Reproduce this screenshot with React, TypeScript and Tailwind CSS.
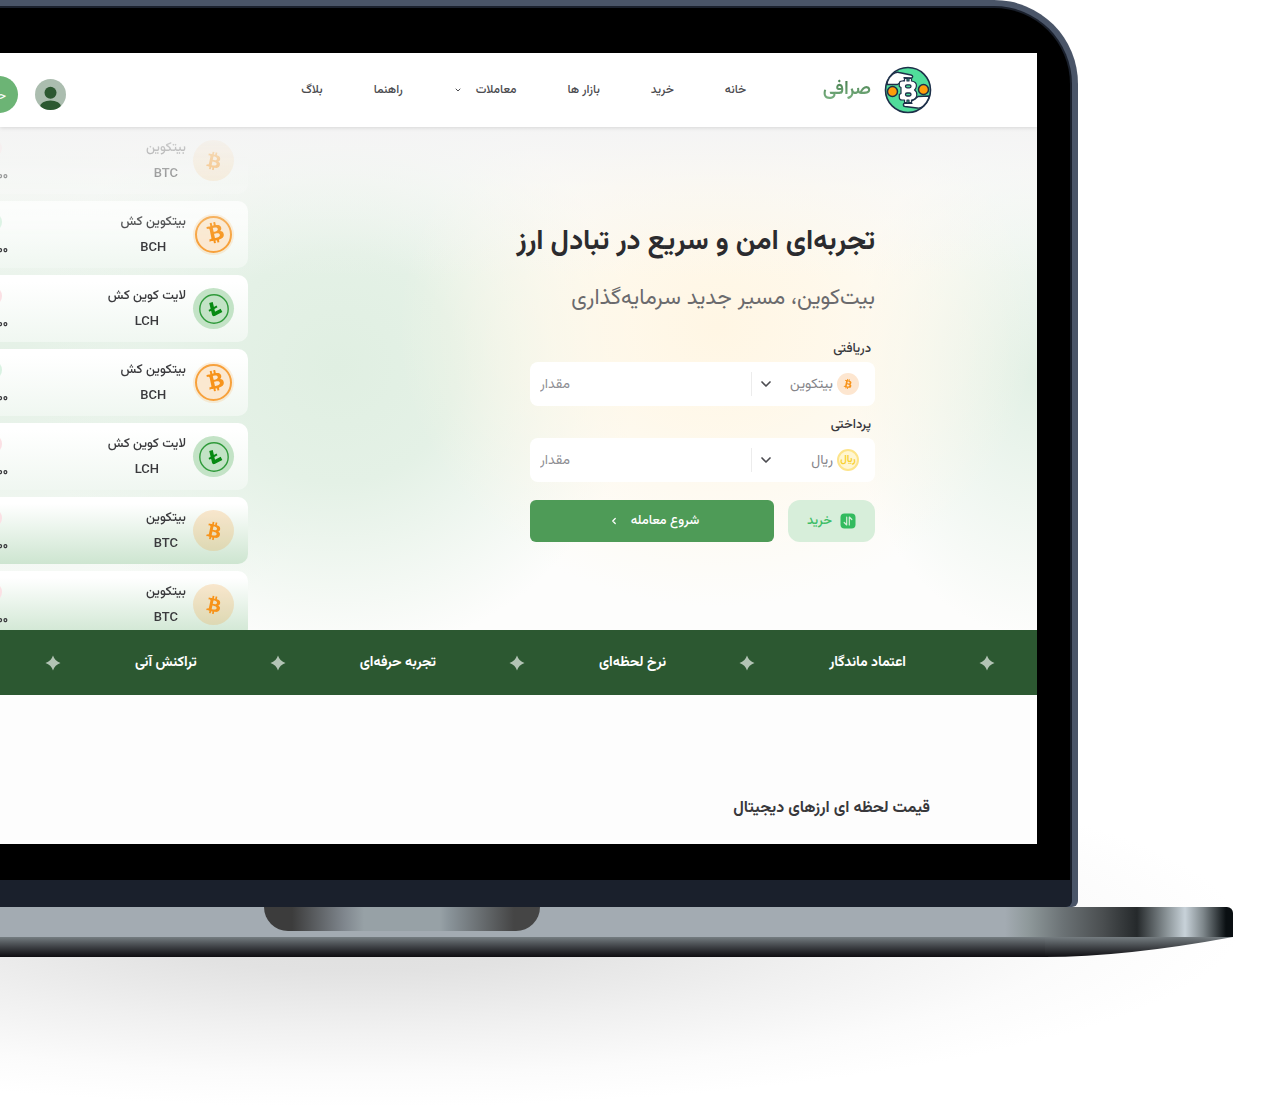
import { useState } from "react";
import { FaBtc } from "react-icons/fa";
import { ChevronDown, ChevronLeft } from "lucide-react";

type Coin = "btc" | "bch" | "lch";

const navItems = ["خانه", "خرید", "بازار ها", "معاملات", "راهنما", "بلاگ"];

const assets: { name: string; symbol: string; coin: Coin; up: boolean }[] = [
  { name: "بیتکوین", symbol: "BTC", coin: "btc", up: false },
  { name: "بیتکوین کش", symbol: "BCH", coin: "bch", up: true },
  { name: "لایت کوین کش", symbol: "LCH", coin: "lch", up: false },
  { name: "بیتکوین کش", symbol: "BCH", coin: "bch", up: true },
  { name: "لایت کوین کش", symbol: "LCH", coin: "lch", up: false },
  { name: "بیتکوین", symbol: "BTC", coin: "btc", up: false },
  { name: "بیتکوین", symbol: "BTC", coin: "btc", up: false },
];

const features = ["اعتماد ماندگار", "نرخ لحظه‌ای", "تجربه حرفه‌ای", "تراکنش آنی"];

function Logo() {
  return (
    <svg viewBox="0 0 48 48" className="size-12 shrink-0" aria-hidden="true">
      <circle cx="24" cy="24" r="22.5" fill="#50dd9b" stroke="#1d2f49" strokeWidth="1.6" />
      <path
        d="M3.500 15.500C6 9 11 5.500 15 6.500L27 9C29.500 9.600 29 12 27 12L20 11.800L23 13L17.500 16L13.500 18.500L3 18.500Z"
        fill="#fff" stroke="#1d2f49" strokeWidth="1.400" strokeLinejoin="round"
      />
      <path
        d="M44.500 32.500C42 39 37 43 33 42L21 40.500C18.500 40 19 37.300 21 37.300L28 37.300L25 36.300L30.500 33.500L34 30.500L45.200 30Z"
        fill="#fff" stroke="#1d2f49" strokeWidth="1.400" strokeLinejoin="round"
      />
      <circle cx="8.500" cy="25.500" r="5" fill="#ff9d0a" stroke="#1d2f49" strokeWidth="1.500" />
      <circle cx="39.500" cy="23.500" r="5" fill="#ff9d0a" stroke="#1d2f49" strokeWidth="1.500" />
      <path
        d="M18 15H20.500V12.500H23V15H25V12.500H27.500V15C31 15.500 32.600 17.500 32.400 20C32.200 22 31.500 23.200 30.500 24C32 25 33 26.500 32.800 29C32.500 32 30.500 33.700 27.500 34V36.500H25V34H23V36.500H20.500V34H18C16 34 15.300 33 15.300 31.500V28.500L17 27.500V21.500L15.300 20.500V17.500C15.300 16 16 15 18 15Z"
        fill="#fff" stroke="#1d2f49" strokeWidth="1.200" strokeLinejoin="round"
      />
      <rect x="21.500" y="18.800" width="5.500" height="3" rx="1.500" fill="#50dd9b" stroke="#1d2f49" strokeWidth="1.300" />
      <rect x="21.500" y="27" width="5.500" height="3" rx="1.500" fill="#50dd9b" stroke="#1d2f49" strokeWidth="1.300" />
    </svg>
  );
}

function CoinIcon({ coin }: { coin: Coin }) {
  if (coin === "btc") {
    return (
      <span className="flex size-[41px] shrink-0 items-center justify-center rounded-full bg-[#f7931a]/20">
        <FaBtc className="size-[18px] rotate-12 text-[#f7931a]" />
      </span>
    );
  }
  if (coin === "bch") {
    return (
      <span className="flex size-[41px] shrink-0 items-center justify-center rounded-full bg-[#f7931a]/15">
        <span className="flex size-[37px] items-center justify-center rounded-full border-2 border-[#f7a13c] bg-[#fbe8d0]">
          <FaBtc className="-mt-1 -mr-1 size-[21px] -rotate-12 text-[#f7931a]" />
        </span>
      </span>
    );
  }
  return (
    <span className="flex size-[41px] shrink-0 items-center justify-center rounded-full bg-[#c3e3c6]">
      <svg viewBox="0 0 30 30" className="size-[30px]" aria-hidden="true">
        <circle cx="15" cy="15" r="14.200" fill="none" stroke="#2f9a3a" strokeWidth="1.400" />
        <path d="M12 8.500L14.800 20.300L22.500 16.300" fill="none" stroke="#078a12" strokeWidth="3.600" strokeLinejoin="round" />
        <path d="M10 16.800L18 12.300" fill="none" stroke="#078a12" strokeWidth="2" />
      </svg>
    </span>
  );
}

function Star() {
  return (
    <svg viewBox="0 0 16 16" className="size-4 shrink-0" aria-hidden="true">
      <path d="M8 0.500Q9.800 6.200 15.500 8Q9.800 9.800 8 15.500Q6.200 9.800 0.500 8Q6.200 6.200 8 0.500Z" fill="#b3c4b5" />
    </svg>
  );
}

function AmountField({ id, label, currency, icon }: { id: string; label: string; currency: string; icon: React.ReactNode }) {
  const [value, setValue] = useState("");
  return (
    <div>
      <label htmlFor={id} className="block px-1 text-[13px] leading-[26px] font-medium text-[#38383c]">
        {label}
      </label>
      <div className="flex h-11 items-center rounded-lg bg-white ps-4 pe-2.5 text-[14px] text-[#85858a]">
        {icon}
        <span className="relative flex h-full w-[85px] items-center">
          <select aria-label={`ارز ${label}`} className="size-full appearance-none bg-transparent ps-1 pt-0.5 outline-none">
            <option>{currency}</option>
          </select>
          <ChevronDown className="pointer-events-none absolute end-1.5 size-4 text-[#4b4b50]" strokeWidth={2.5} />
        </span>
        <span className="h-6 w-px bg-[#ececec]" />
        <input
          id={id}
          value={value}
          onChange={(e) => setValue(e.target.value)}
          placeholder="مقدار"
          className="min-w-0 flex-1 bg-transparent pt-0.5 text-left outline-none placeholder:text-[#8f8f94]"
        />
      </div>
    </div>
  );
}

function Header() {
  return (
    <header className="relative z-10 flex h-[74px] items-center bg-white ps-[105px] shadow-[0_1px_4px_rgba(0,0,0,0.12)]">
      <Logo />
      <span className="ms-[13px] me-[73px] w-[52px] shrink-0 bg-linear-to-b from-[#37703f] to-[#8cc394] bg-clip-text text-[19px] leading-8 font-semibold whitespace-nowrap text-transparent">
        صرافی
      </span>
      <nav className="flex shrink-0 items-center gap-[51px] text-[12px] font-medium whitespace-nowrap text-[#4b4b4f]">
        {navItems.map((item) => (
          <a key={item} href="#" className="flex items-center gap-3.5">
            {item}
            {item === "معاملات" && <ChevronDown className="size-2" strokeWidth={3} />}
          </a>
        ))}
      </nav>
      <div className="ms-[235px] flex shrink-0 items-center gap-[17px] pt-2">
        <button type="button" aria-label="پروفایل" className="size-[31px] overflow-hidden rounded-full">
          <svg viewBox="0 0 31 31" className="size-full" aria-hidden="true">
            <rect width="31" height="31" fill="#abbdaf" />
            <circle cx="15.500" cy="13.700" r="6" fill="#2c5831" />
            <ellipse cx="15.500" cy="27.500" rx="10.500" ry="6" fill="#2c5831" />
          </svg>
        </button>
        <button type="button" className="h-[37px] rounded-full bg-[#6cb475] px-3 pt-1 text-[12px] whitespace-nowrap text-white">
          حساب کاربری
        </button>
      </div>
    </header>
  );
}

function AssetRow({ asset, first }: { asset: (typeof assets)[number]; first: boolean }) {
  const tone = first
    ? "from-white/10 to-white/30"
    : asset.coin === "btc"
      ? "from-white from-10% to-[#cde5d0]"
      : "from-white from-10% to-[#f0f7f1]";
  return (
    <li className={`flex h-[67px] shrink-0 items-center rounded-s-[10px] bg-linear-to-b ps-3.5 ${tone}`}>
      <CoinIcon coin={asset.coin} />
      <div className="flex w-[185px] shrink-0 ps-[7px]">
        <div className="text-center text-[13px] leading-[26px] font-medium whitespace-nowrap text-[#3a3a3d]">
          <p>{asset.name}</p>
          <p>{asset.symbol}</p>
        </div>
      </div>
      <div className="flex shrink-0 flex-col gap-0.5 pt-2">
        <span className={`ms-1.5 h-5 w-12 rounded-full ${asset.up ? "bg-[#d9f2e2]" : "bg-[#fbe0e4]"}`} />
        <p className="w-12 text-[12px] leading-8 font-bold text-[#3a3a3d]">۰۰</p>
      </div>
    </li>
  );
}

function Hero() {
  return (
    <section className="flex h-[503px] overflow-hidden bg-[#fdfdfc] bg-[linear-gradient(to_bottom,#f4f4f4_0,rgba(246,246,245,0.5)_60px,rgba(255,255,255,0)_150px),radial-gradient(320px_280px_at_calc(100%_-_320px)_200px,#fff6e4_0,rgba(255,247,230,0.8)_35%,rgba(255,248,235,0)_100%),radial-gradient(300px_290px_at_calc(100%_-_700px)_240px,#e0efe2_0,#e4f1e6_40%,rgba(230,241,232,0)_100%),radial-gradient(190px_260px_at_100%_250px,#e2f0e5_0,rgba(230,241,232,0)_100%),radial-gradient(360px_300px_at_calc(100%_-_1030px)_240px,#e3f0e5_0,rgba(230,241,232,0)_100%)] ps-[162px]">
      <form className="w-[345px] shrink-0 pt-[92px]" onSubmit={(e) => e.preventDefault()}>
        <h1 className="text-[28px] leading-[46px] font-bold whitespace-nowrap text-[#2b2b2e]">تجربه‌ای امن و سریع در تبادل ارز</h1>
        <p className="mt-3 mb-[15px] text-[22px] leading-[44px] whitespace-nowrap text-[#6a6a6d]">بیت‌کوین، مسیر جدید سرمایه‌گذاری</p>
        <div className="flex flex-col gap-1.5">
          <AmountField
            id="receive"
            label="دریافتی"
            currency="بیتکوین"
            icon={
              <span className="flex size-[22px] shrink-0 items-center justify-center rounded-full bg-[#fde6d0]">
                <FaBtc className="size-2.5 rotate-12 text-[#f7931a]" />
              </span>
            }
          />
          <AmountField
            id="pay"
            label="پرداختی"
            currency="ریال"
            icon={
              <span className="flex size-[22px] shrink-0 items-center justify-center rounded-full border-2 border-[#fde48a] bg-[#fff6d2] text-[10px] leading-none font-bold text-[#f8d030]">
                ﷼
              </span>
            }
          />
        </div>
        <div className="mt-[18px] flex h-[42px] gap-3.5">
          <button type="button" className="flex w-[87px] items-center justify-center gap-2 rounded-xl bg-[#d7eeda] text-[13px] font-medium text-[#3dbd66]">
            <svg viewBox="0 0 16 16" className="size-4" aria-hidden="true">
              <rect x="0.500" y="0.500" width="15" height="15" rx="4" fill="#33bb5f" />
              <path d="M9.300 12V4L11.800 6.500M6.700 4V12L4.200 9.500" fill="none" stroke="#d7eeda" strokeWidth="1.200" strokeLinecap="round" strokeLinejoin="round" />
            </svg>
            <span className="pt-0.5">خرید</span>
          </button>
          <button type="submit" className="flex flex-1 items-center justify-center gap-3 rounded-md bg-[#4e9b57] pe-1 text-[13px] font-medium text-white">
            <span className="pt-0.5">شروع معامله</span>
            <ChevronLeft className="size-2.5" strokeWidth={3} />
          </button>
        </div>
      </form>
      <ul className="ms-[282px] flex min-w-0 flex-1 flex-col gap-[7px] [mask-image:linear-gradient(to_bottom,rgba(0,0,0,0.1),black_115px)]">
        {assets.map((asset, i) => (
          <AssetRow key={i} asset={asset} first={i === 0} />
        ))}
      </ul>
    </section>
  );
}

function Ticker() {
  return (
    <section className="flex h-[65px] items-center gap-[74px] bg-[#2c5831] ps-[42px] text-[14px] font-bold text-white">
      {features.map((feature) => (
        <div key={feature} className="flex shrink-0 items-center gap-[73px] whitespace-nowrap">
          <Star />
          <span className="pt-0.5">{feature}</span>
        </div>
      ))}
      <Star />
    </section>
  );
}

export default function App() {
  return (
    <div className="min-h-screen overflow-hidden bg-white font-['Vazirmatn','DejaVu_Sans',sans-serif]">
      <div className="relative isolate">
        <div className="absolute inset-x-0 top-full -z-10 -mt-40 h-[311px] bg-[radial-gradient(880px_180px_at_360px_130px,#dedede_0,#e2e2e2_25%,#f0f0f0_55%,#fbfbfb_82%,rgba(255,255,255,0)_100%)]" />

        <div className="mr-[202px] rounded-tr-[84px] rounded-br-md bg-[#4a5568] pt-1.5 pr-1.5">
          <div className="rounded-tr-[78px] rounded-br-md bg-[#1a202c] pt-0.5">
            <div className="mr-0.5 rounded-tr-[76px] bg-black pt-[45px] pr-[33px] pb-9">
              <main dir="rtl" className="overflow-hidden bg-[#fdfdfd]">
                <Header />
                <Hero />
                <Ticker />
                <section className="h-[149px] ps-[107px] pt-[98px]">
                  <h2 className="text-[16px] leading-8 font-bold text-[#38383b]">قیمت لحظه ای ارزهای دیجیتال</h2>
                </section>
              </main>
            </div>
            <div className="h-[27px]" />
          </div>
        </div>

        <div className="mr-[47px]">
          <div className="flex h-[30px] justify-end rounded-tr-md bg-[linear-gradient(to_left,#0a0f12_0,#0a0f12_7px,#7f888c_30px,#c8d2d9_48px,#8b9498_66px,#25292b_96px,#4a4e50_130px,#6b7275_170px,#8f999b_205px,#a3abb2_228px)]">
            <div className="mr-[693px] h-6 w-[276px] rounded-b-3xl bg-[linear-gradient(to_right,#3c3c3c_0,#3c3c3c_28px,#7f868d_80px,#97a1a6_100px,#97a1a6_176px,#8b959b_184px,#454545_250px)]" />
          </div>
          <div className="flex h-5">
            <div className="flex-1 bg-linear-to-b from-[#757d81] to-[#0e0d11]" />
            <svg viewBox="0 0 188 20" className="h-5 w-[188px]" aria-hidden="true">
              <defs>
                <linearGradient id="underside" x1="0" y1="0" x2="0" y2="1">
                  <stop offset="0" stopColor="#757d81" />
                  <stop offset="1" stopColor="#0e0d11" />
                </linearGradient>
              </defs>
              <path d="M0 0H188Q80 20 0 20Z" fill="url(#underside)" />
            </svg>
          </div>
        </div>
      </div>
    </div>
  );
}
